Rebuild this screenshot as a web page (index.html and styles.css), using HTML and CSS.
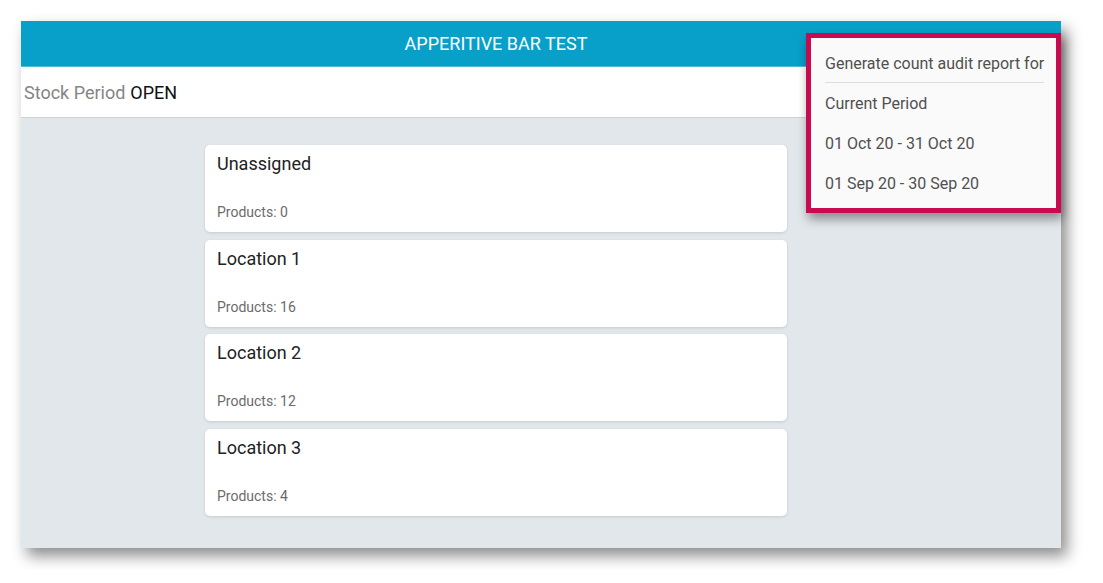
FILE: index.html
```html
<!DOCTYPE html>
<html lang="en">
<head>
<meta charset="UTF-8">
<meta name="viewport" content="width=device-width, initial-scale=1.0">
<title>Apperitive Bar Test</title>
<link rel="stylesheet" href="styles.css">
</head>
<body>
<div class="app">
<header class="topbar">
<h1>APPERITIVE BAR TEST</h1>
<div class="topbar-actions"></div>
</header>
<div class="period-bar">
<span class="period-label">Stock Period</span> <span class="period-state">OPEN</span>
</div>
<main class="content">
<div class="locations">
<div class="location-card">
<h2>Unassigned</h2>
<p>Products: 0</p>
</div>
<div class="location-card">
<h2>Location 1</h2>
<p>Products: 16</p>
</div>
<div class="location-card">
<h2>Location 2</h2>
<p>Products: 12</p>
</div>
<div class="location-card">
<h2>Location 3</h2>
<p>Products: 4</p>
</div>
</div>
<div class="side-space"></div>
</main>

<div class="report-menu">
<div class="menu-title">Generate count audit report for</div>
<div class="menu-item">Current Period</div>
<div class="menu-item">01 Oct 20 - 31 Oct 20</div>
<div class="menu-item">01 Sep 20 - 30 Sep 20</div>
</div>
</div>
</body>
</html>
```

FILE: styles.css
```css
body {
font-family: Roboto, "Liberation Sans", sans-serif;
margin: 0;
padding: 21px;
background-color: #fff;
}

.app {
position: relative;
width: 1040px;
height: 527px;
background-color: #e2e7eb;
box-shadow: 6px 8px 14px rgba(0, 0, 0, 0.45);
display: flex;
flex-direction: column;
}

.topbar {
display: flex;
align-items: center;
height: 45px;
background-color: #08a0c9;
border-bottom: 1px solid #4fbcd9;
}

.topbar h1 {
flex: 1;
margin: 0;
text-align: center;
color: #fff;
font-size: 18px;
font-weight: 400;
}

.topbar-actions {
width: 90px;
}

.period-bar {
height: 50px;
display: flex;
align-items: center;
padding-left: 3px;
background-color: #fff;
border-bottom: 1px solid #cfd3d6;
font-size: 18px;
}

.period-label {
color: #858585;
margin-right: 5px;
}

.period-state {
color: #111;
}

.content {
flex: 1;
display: flex;
padding-top: 27px;
}

.locations {
flex: 1;
display: flex;
flex-direction: column;
align-items: center;
gap: 7.7px;
}

.side-space {
width: 90px;
}

.location-card {
width: 582px;
height: 87px;
box-sizing: border-box;
padding: 8px 12px 12px;
background-color: #fff;
border-radius: 5px;
box-shadow: 0 1px 3px rgba(0, 0, 0, 0.12);
display: flex;
flex-direction: column;
justify-content: space-between;
}

.location-card h2 {
margin: 0;
font-size: 18px;
font-weight: 400;
color: #222;
}

.location-card p {
margin: 0;
font-size: 14px;
color: #6b6b6b;
}

.report-menu {
position: absolute;
top: 12px;
right: 0;
width: 219px;
padding: 8px 12px 4px 14px;
background-color: #fafafa;
border: 5px solid #c90a50;
box-shadow: 2px 6px 10px rgba(0, 0, 0, 0.4);
color: #505050;
font-size: 16px;
white-space: nowrap;
}

.menu-title {
line-height: 36px;
border-bottom: 1px solid #dedede;
margin-bottom: 1px;
}

.menu-item {
line-height: 40px;
}
```
